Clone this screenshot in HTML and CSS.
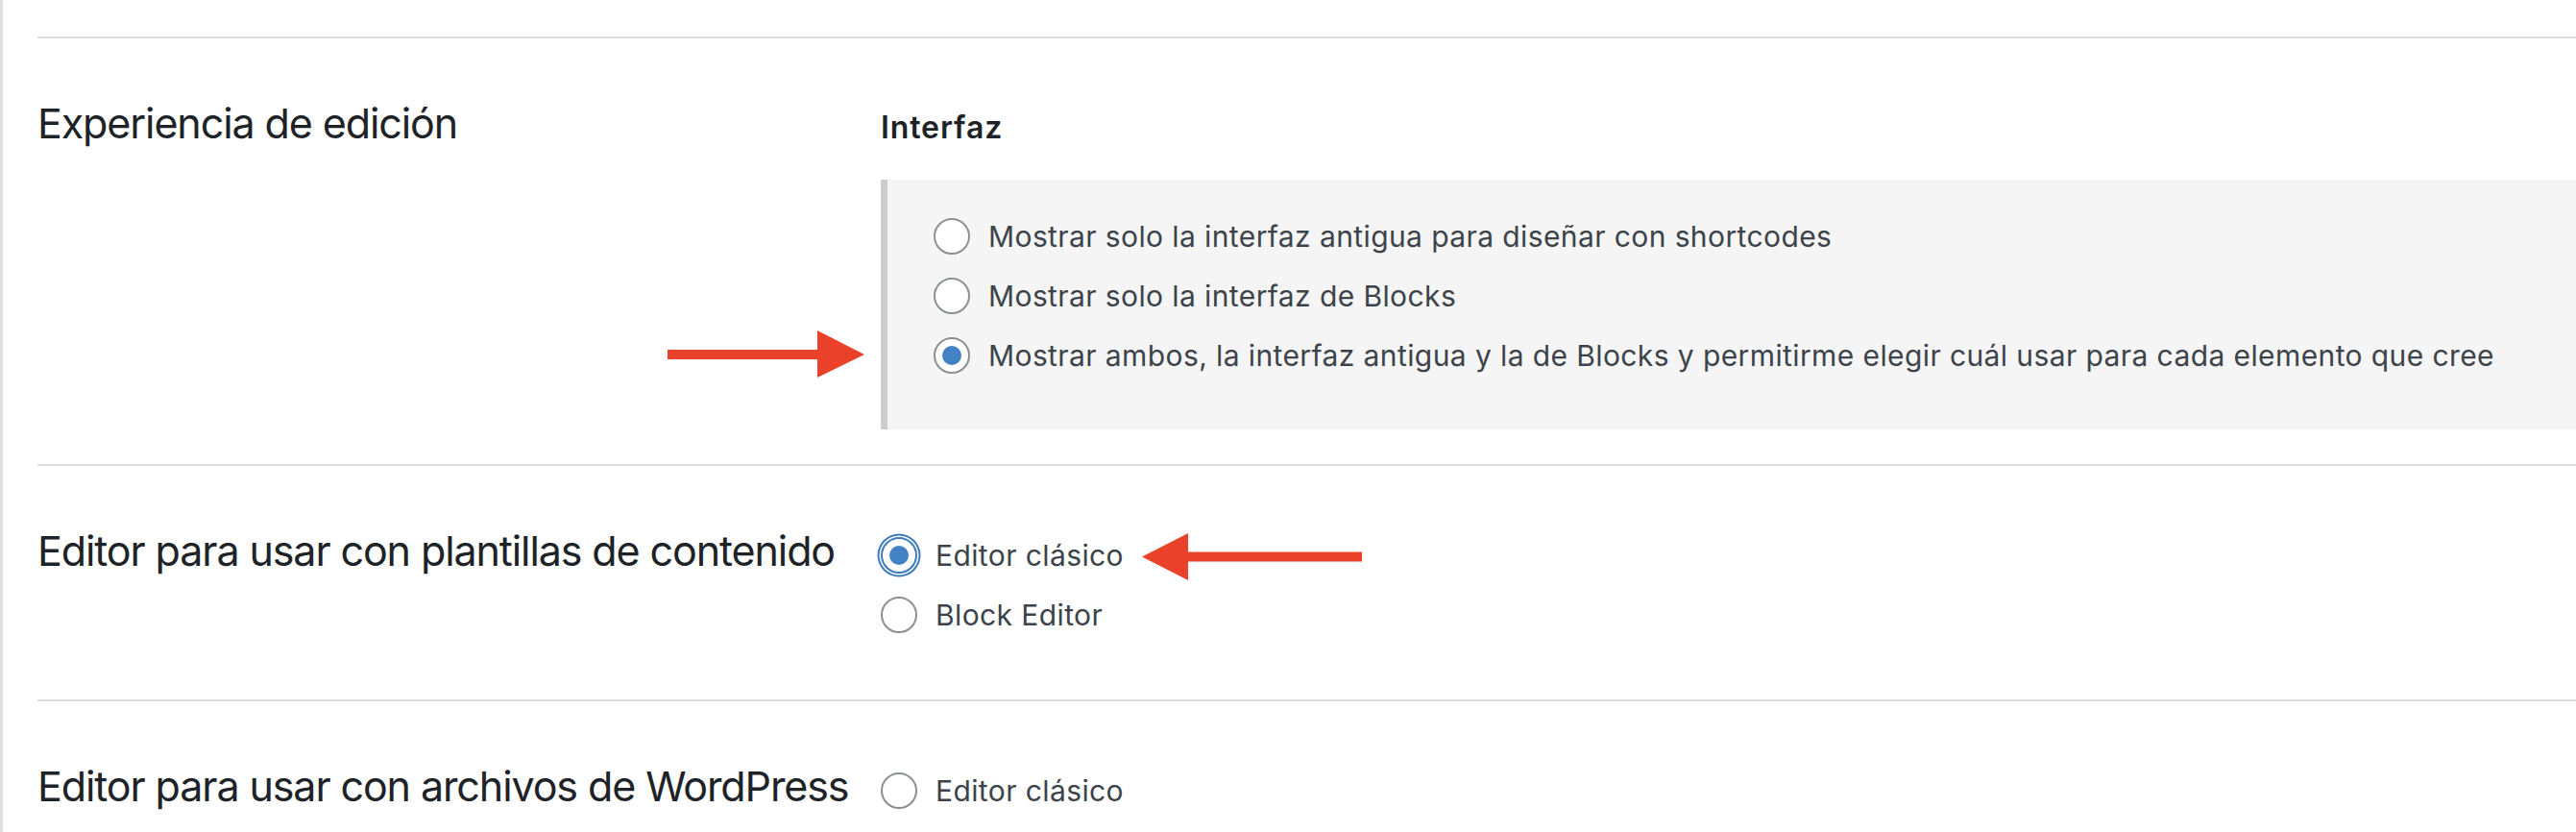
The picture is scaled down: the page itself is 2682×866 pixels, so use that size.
FILE: index.html
```html
<!DOCTYPE html>
<html lang="es">
<head>
  <meta charset="UTF-8" />
  <meta name="viewport" content="width=device-width, initial-scale=1.0" />
  <title>Ajustes del editor</title>
  <link rel="stylesheet" href="styles.css">
</head>
<body>
  <div class="page">
    <div class="setting setting-first">
      <div class="setting-label">Experiencia de edición</div>
      <div class="setting-field field-titled">
        <h4 class="field-title">Interfaz</h4>
        <div class="choice-box">
          <label class="choice"><input type="radio" name="interface" value="legacy">Mostrar solo la interfaz antigua para diseñar con shortcodes</label>
          <label class="choice"><input type="radio" name="interface" value="blocks">Mostrar solo la interfaz de Blocks</label>
          <label class="choice"><input type="radio" name="interface" value="both" checked>Mostrar ambos, la interfaz antigua y la de Blocks y permitirme elegir cuál usar para cada elemento que cree</label>
        </div>
      </div>
    </div>

    <div class="setting">
      <div class="setting-label">Editor para usar con plantillas de contenido</div>
      <div class="setting-field">
        <div class="choice-list">
          <label class="choice"><input type="radio" name="ct_editor" value="classic" class="is-focused" checked>Editor clásico</label>
          <label class="choice"><input type="radio" name="ct_editor" value="block">Block Editor</label>
        </div>
      </div>
    </div>

    <div class="setting">
      <div class="setting-label">Editor para usar con archivos de WordPress</div>
      <div class="setting-field">
        <div class="choice-list">
          <label class="choice"><input type="radio" name="wpa_editor" value="classic">Editor clásico</label>
        </div>
      </div>
    </div>
  </div>

  <!-- annotation arrows -->
  <svg class="arrow arrow-right" width="205" height="50" viewBox="0 0 205 50">
    <rect x="0" y="20" width="157" height="10" />
    <polygon points="156,0 205,25 156,49" />
  </svg>
  <svg class="arrow arrow-left" width="229" height="50" viewBox="0 0 229 50">
    <polygon points="0,24.5 48,0 48,49" />
    <rect x="47" y="19.5" width="182" height="10" />
  </svg>
</body>
</html>
```

FILE: styles.css
```css
body {
  margin: 0;
  background: #fff;
  font-family: Inter, "Noto Sans", sans-serif;
  color: #3c434a;
  overflow: hidden;
}
.page {
  min-height: 866px;
  border-left: 3px solid #e0e0e0;
  padding: 38px 0 0 36px;
  box-sizing: border-box;
}
.setting {
  display: flex;
  align-items: flex-start;
  border-top: 2px solid #dcdcde;
  padding: 60px 0 36px;
}
.setting-label {
  width: 878px;
  flex-shrink: 0;
  font-size: 43px;
  line-height: 56px;
  color: #1d2327;
  letter-spacing: -1.1px;
}
.setting-field {
  flex: 1;
  padding-top: 2px;
}
.field-titled {
  padding-top: 13px;
}
.field-title {
  margin: 0 0 34px;
  font-size: 32px;
  line-height: 40px;
  font-weight: 600;
  letter-spacing: 0.9px;
  color: #1d2327;
}
.choice-box {
  background: #f5f5f5;
  border-left: 7px solid #cdcdcd;
  padding: 28px 0 46px 48px;
}
.choice-list {
  margin-bottom: 21px;
}
.choice {
  display: flex;
  align-items: center;
  height: 62px;
  line-height: 62px;
  font-size: 30px;
  letter-spacing: 0.4px;
  white-space: nowrap;
}
.choice input {
  appearance: none;
  -webkit-appearance: none;
  display: grid;
  place-items: center;
  width: 38px;
  height: 38px;
  margin: 0 19px 0 0;
  border: 2px solid #8c8f94;
  border-radius: 50%;
  background: #fff;
  box-sizing: border-box;
  flex-shrink: 0;
}
.choice input:checked::before {
  content: "";
  width: 20px;
  height: 20px;
  border-radius: 50%;
  background: #4281c4;
}
.choice input.is-focused {
  border-color: #3d7abb;
  box-shadow: 0 0 0 1.5px #fff, 0 0 0 3.5px #3d7abb;
}
.arrow {
  position: absolute;
  fill: #e9412a;
}
.arrow-right {
  left: 695px;
  top: 344px;
}
.arrow-left {
  left: 1189px;
  top: 555px;
}
```
